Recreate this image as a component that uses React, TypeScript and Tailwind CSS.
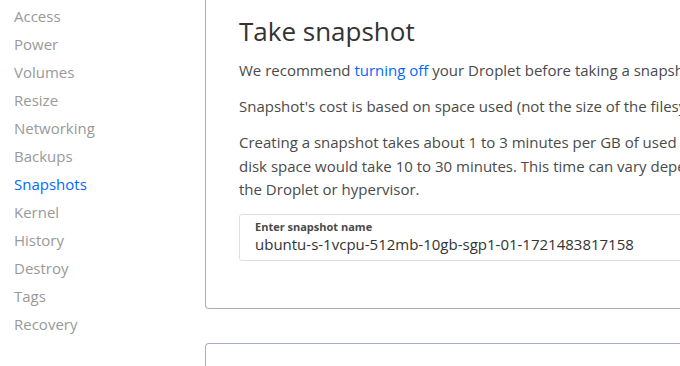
const navItems = [
  "Access",
  "Power",
  "Volumes",
  "Resize",
  "Networking",
  "Backups",
  "Snapshots",
  "Kernel",
  "History",
  "Destroy",
  "Tags",
  "Recovery",
];

export default function App() {
  return (
    <div
      className="flex h-[366px] w-[680px] overflow-hidden bg-white text-[15px]"
      style={{ fontFamily: '"Open Sans", "Liberation Sans", sans-serif' }}
    >
      <nav className="flex w-[205px] shrink-0 flex-col pt-[2px] pl-[14px]">
        {navItems.map((item) => (
          <a
            key={item}
            className={`block h-[28px] leading-[28px] ${
              item === "Snapshots" ? "text-[#0069ff]" : "text-[#999999]"
            }`}
          >
            {item}
          </a>
        ))}
      </nav>

      <div className="flex min-w-[700px] flex-col">
        <section className="h-[309px] shrink-0 rounded-b-[4px] border border-t-0 border-[#a7adc6] pt-[14px] pl-[33px]">
          <h2 className="text-[26px] leading-[34px] text-[#333333]">Take snapshot</h2>
          <div className="mt-[11px] space-y-[12.5px] whitespace-nowrap leading-[23.5px] text-[#4a4a4a]">
            <p>
              We recommend <a className="text-[#0069ff]">turning off</a> your Droplet before taking a snapshot to ensure data consistency.
            </p>
            <p>Snapshot's cost is based on space used (not the size of the filesystem).</p>
            <p>
              Creating a snapshot takes about 1 to 3 minutes per GB of used disk space. A Droplet with 10GB of used
              <br />
              disk space would take 10 to 30 minutes. This time can vary depending on the activity level of
              <br />
              the Droplet or hypervisor.
            </p>
          </div>
          <div className="mt-[12px] flex h-[47px] flex-col justify-center rounded-[3px] border border-[#dfdfdf] pl-[15px]">
            <span className="text-[11px] font-bold leading-[14px] text-[#4a4a4a]">Enter snapshot name</span>
            <span className="text-[15px] leading-[20px] text-[#333333]">ubuntu-s-1vcpu-512mb-10gb-sgp1-01-1721483817158</span>
          </div>
        </section>
        <section className="mt-[34px] h-[60px] shrink-0 rounded-t-[4px] border border-b-0 border-[#a7adc6]" />
      </div>
    </div>
  );
}
